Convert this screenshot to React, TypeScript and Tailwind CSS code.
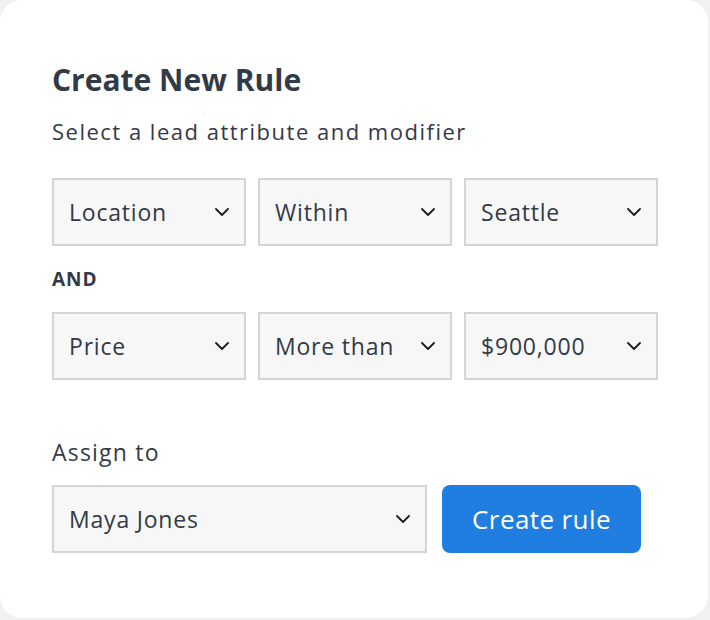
const Chevron = () => (
  <svg width="14" height="8" viewBox="0 0 14 8" fill="none" className="shrink-0">
    <path d="M1 1l6 6 6-6" stroke="#1f1f1f" strokeWidth="1.8" strokeLinecap="round" strokeLinejoin="round" />
  </svg>
);

const Select = ({ value, className = "" }: { value: string; className?: string }) => (
  <div
    className={`flex h-[68px] items-center justify-between border-2 border-[#d4d4d4] bg-[#f7f7f7] pl-[15px] pr-[15px] text-[23px] tracking-[0.8px] text-[#333a47] ${className}`}
  >
    <span>{value}</span>
    <Chevron />
  </div>
);

export default function App() {
  return (
    <div className="h-[620px] w-[710px] bg-[#f1f1f1] font-['Open_Sans',sans-serif]">
      <div className="h-[618px] w-[708px] rounded-[22px] bg-white pl-[52px] pt-[62px] text-[#333a47]">
        <h1 className="text-[30px] font-bold leading-[36px]">Create New Rule</h1>
        <p className="mt-[18px] text-[22px] leading-[30px] tracking-[1.5px]">
          Select a lead attribute and modifier
        </p>

        <div className="mt-[32px] grid w-[606px] grid-cols-3 gap-3">
          <Select value="Location" />
          <Select value="Within" />
          <Select value="Seattle" />
        </div>

        <div className="mt-[21px] text-[19px] font-bold leading-[24px] tracking-[1px]">AND</div>

        <div className="mt-[21px] grid w-[606px] grid-cols-3 gap-3">
          <Select value="Price" />
          <Select value="More than" />
          <Select value="$900,000" />
        </div>

        <div className="mt-[57px] text-[23px] leading-[30px] tracking-[1.2px]">Assign to</div>

        <div className="mt-[18px] flex items-center gap-[15px]">
          <Select value="Maya Jones" className="w-[375px]" />
          <button className="h-[68px] w-[199px] rounded-[8px] bg-[#1f7ee0] text-[26px] tracking-[0.4px] text-white">
            Create rule
          </button>
        </div>
      </div>
    </div>
  );
}
